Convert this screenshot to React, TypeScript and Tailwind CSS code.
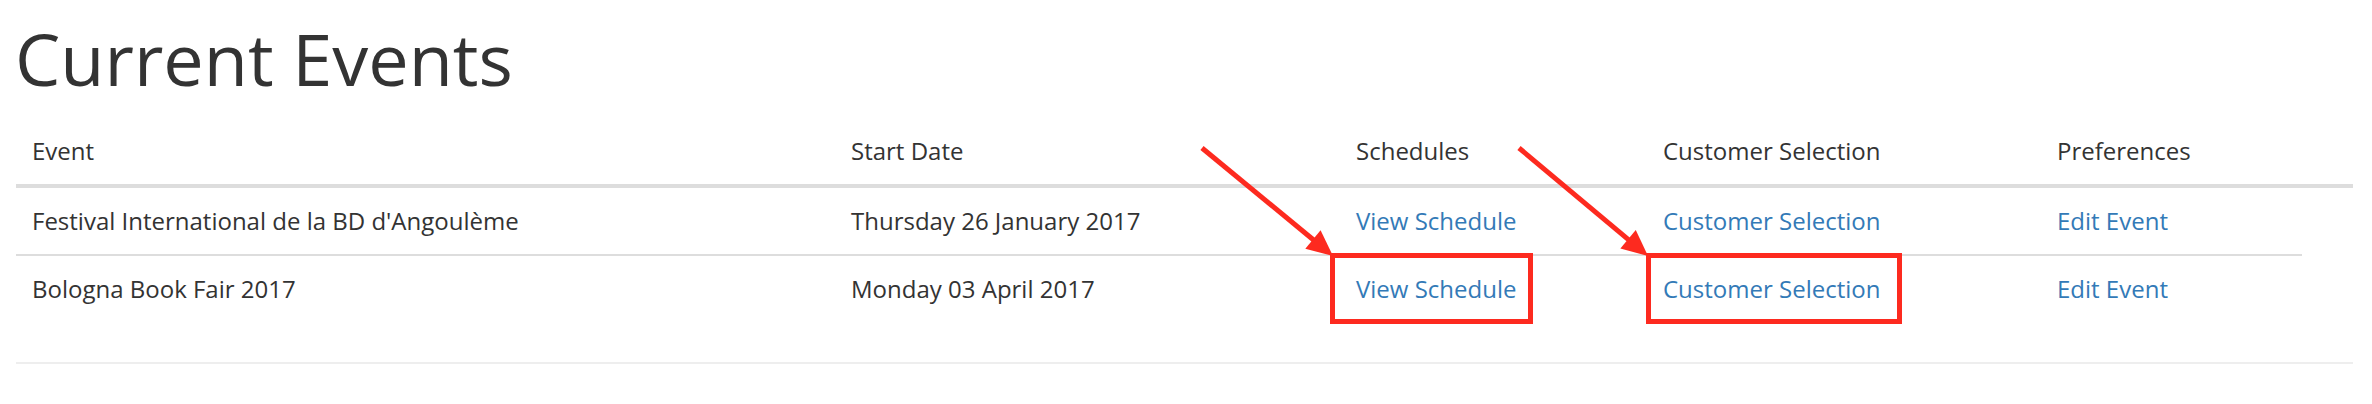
import React from 'react';

// Eventos actuales con anotaciones rojas encima (flechas + recuadros)
interface EventRow {
  name: string;
  start: string;
}

const events: EventRow[] = [
  { name: "Festival International de la BD d'Angoulème", start: 'Thursday 26 January 2017' },
  { name: 'Bologna Book Fair 2017', start: 'Monday 03 April 2017' },
];

const RED = '#fd2a1f';

function Arrow({ x1, y1, x2, y2 }: { x1: number; y1: number; x2: number; y2: number }) {
  const dx = x2 - x1;
  const dy = y2 - y1;
  const len = Math.hypot(dx, dy);
  const ux = dx / len;
  const uy = dy / len;
  const headLen = 26;
  const half = 12;
  const bx = x2 - ux * headLen;
  const by = y2 - uy * headLen;
  const px = -uy;
  const py = ux;
  const pts = `${x2},${y2} ${bx + px * half},${by + py * half} ${bx - px * half},${by - py * half}`;
  return (
    <g>
      <line x1={x1} y1={y1} x2={bx + ux * 4} y2={by + uy * 4} stroke={RED} strokeWidth={5} />
      <polygon points={pts} fill={RED} />
    </g>
  );
}

export default function App() {
  return (
    <div className="relative w-[2372px] h-[404px] bg-white text-[#333] font-['Open_Sans',sans-serif] pl-[16px] pr-[19px] overflow-hidden">
      <h1 className="mt-[18px] ml-[-1px] text-[72px] leading-[80px] font-normal">Current Events</h1>

      <table className="mt-[20px] w-full table-fixed border-collapse text-[24px] leading-[34px]">
        <thead>
          <tr>
            <th className="w-[819px] p-[16px] text-left font-normal border-b-4 border-[#ddd]">Event</th>
            <th className="w-[505px] p-[16px] text-left font-normal border-b-4 border-[#ddd]">Start Date</th>
            <th className="w-[307px] p-[16px] text-left font-normal border-b-4 border-[#ddd]">Schedules</th>
            <th className="w-[394px] p-[16px] text-left font-normal border-b-4 border-[#ddd]">Customer Selection</th>
            <th className="w-[261px] p-[16px] text-left font-normal border-b-4 border-[#ddd]">Preferences</th>
            <th className="p-[16px] border-b-4 border-[#ddd]"></th>
          </tr>
        </thead>
        <tbody>
          {events.map((ev, i) => (
            <tr key={ev.name}>
              <td className={`p-[16px] whitespace-nowrap ${i > 0 ? 'border-t-2 border-[#ddd]' : ''}`}>{ev.name}</td>
              <td className={`p-[16px] whitespace-nowrap ${i > 0 ? 'border-t-2 border-[#ddd]' : ''}`}>{ev.start}</td>
              <td className={`p-[16px] whitespace-nowrap text-[#337ab7] ${i > 0 ? 'border-t-2 border-[#ddd]' : ''}`}>View Schedule</td>
              <td className={`p-[16px] whitespace-nowrap text-[#337ab7] ${i > 0 ? 'border-t-2 border-[#ddd]' : ''}`}>Customer Selection</td>
              <td className={`p-[16px] whitespace-nowrap text-[#337ab7] ${i > 0 ? 'border-t-2 border-[#ddd]' : ''}`}>Edit Event</td>
              <td className="p-[16px]"></td>
            </tr>
          ))}
        </tbody>
      </table>

      <hr className="mt-[40px] border-0 border-t-2 border-[#eee]" />

      {/* anotaciones */}
      <svg className="absolute inset-0 pointer-events-none" width={2372} height={404}>
        <Arrow x1={1202} y1={148} x2={1333} y2={256} />
        <Arrow x1={1519} y1={148} x2={1648} y2={256} />
        <rect x={1332.5} y={255.5} width={198} height={66} fill="none" stroke={RED} strokeWidth={5} />
        <rect x={1648.5} y={255.5} width={251} height={66} fill="none" stroke={RED} strokeWidth={5} />
      </svg>
    </div>
  );
}
